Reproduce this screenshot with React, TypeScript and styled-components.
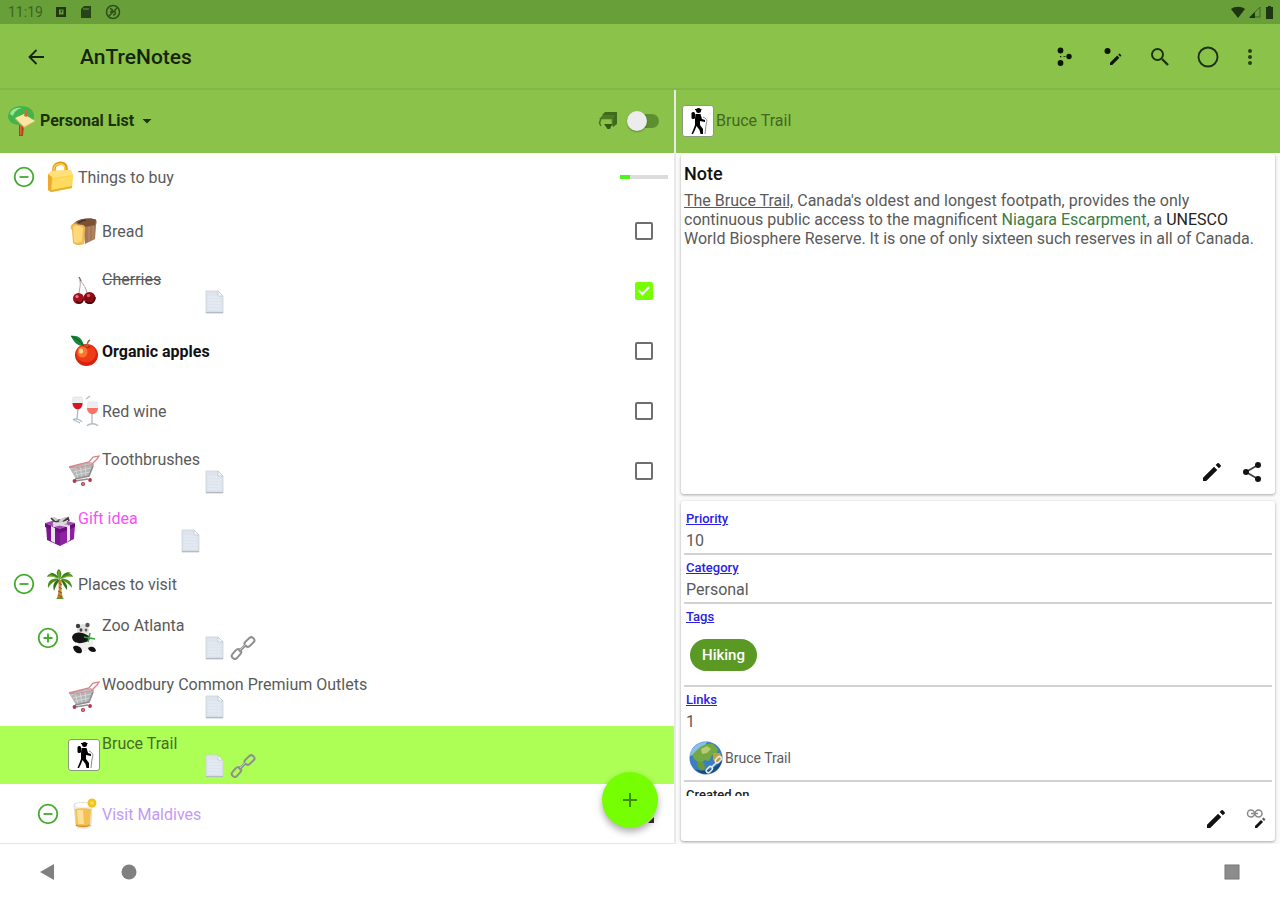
import React from 'react';
import styled, { createGlobalStyle } from 'styled-components';

const GlobalStyle = createGlobalStyle`
  *, *::before, *::after { box-sizing: border-box; }
  body { margin: 0; background: #fff; font-family: Roboto, "Liberation Sans", sans-serif; }
  button { font: inherit; border: 0; padding: 0; background: none; cursor: pointer; }
  svg { display: block; }
`;

const Screen = styled.div`
  height: 100vh;
  display: flex;
  flex-direction: column;
  color: #5a5a5a;
`;

const StatusBar = styled.div`
  flex: none;
  height: 24px;
  padding: 0 6px 0 8px;
  display: flex;
  align-items: center;
  justify-content: space-between;
  background: #689f38;
  color: #3d6420;
  font-size: 14px;
`;

const StatusGroup = styled.div<{ $gap: number }>`
  display: flex;
  align-items: center;
  gap: ${(p) => p.$gap}px;
`;

const AppBar = styled.header`
  flex: none;
  height: 66px;
  padding: 2px 20px 0 24px;
  display: flex;
  align-items: center;
  background: #8bc34a;
  border-bottom: 2px solid #82b84a;
`;

const AppTitle = styled.h1`
  flex: 1;
  margin: 0 0 0 32px;
  font-size: 21px;
  font-weight: 500;
  line-height: 24px;
  color: #15240a;
`;

const IconButton = styled.button`
  width: 24px;
  height: 24px;
  display: flex;
  align-items: center;
  justify-content: center;
`;

const Actions = styled.div`
  display: flex;
  gap: 24px;
  & > :last-child { margin-left: -6px; margin-right: -2px; }
`;

const Panes = styled.main`
  flex: 1;
  min-height: 0;
  display: grid;
  grid-template-columns: 676fr 604fr;
`;

const Pane = styled.section<{ $divided?: boolean }>`
  position: relative;
  min-width: 0;
  min-height: 0;
  display: flex;
  flex-direction: column;
  overflow: hidden;
  background: ${(p) => (p.$divided ? '#fff' : '#fafafa')};
  border-right: ${(p) => (p.$divided ? '2px solid rgba(226, 226, 226, 0.75)' : '0')};
`;

const PaneHeader = styled.div`
  flex: none;
  height: 63px;
  padding: 0 14px 2px 6px;
  display: flex;
  align-items: center;
  background: #8bc34a;
`;

const ListPicker = styled.label`
  display: flex;
  align-items: center;
  gap: 2px;
  margin-right: auto;
`;

const ListSelect = styled.select`
  appearance: none;
  border: 0;
  padding: 0;
  background: none;
  font: 700 16px/24px Roboto, "Liberation Sans", sans-serif;
  color: #1c3009;
`;

const Switch = styled.input`
  appearance: none;
  position: relative;
  width: 32px;
  height: 20px;
  margin: 0 1px 0 9px;
  &::before {
    content: '';
    position: absolute;
    inset: 3px 0 3px 4px;
    border-radius: 7px;
    background: #5d8f30;
  }
  &::after {
    content: '';
    position: absolute;
    left: 0;
    top: 0;
    width: 20px;
    height: 20px;
    border-radius: 50%;
    background: #ececec;
    box-shadow: 0 1px 2px rgba(0, 0, 0, 0.3);
  }
`;

const Tree = styled.ul`
  flex: 1;
  min-height: 0;
  margin: 0;
  padding: 0;
  list-style: none;
  overflow: hidden;
  border-bottom: 1px solid #e6e6e6;
`;

const TreeRow = styled.li<{ $height: number; $depth: number; $selected?: boolean }>`
  height: ${(p) => p.$height}px;
  padding: 0 6px 0 ${(p) => 12 + p.$depth * 24}px;
  display: flex;
  align-items: center;
  background: ${(p) => (p.$selected ? '#adff55' : 'transparent')};
`;

const Expander = styled.button`
  flex: none;
  width: 24px;
  height: 24px;
  margin-right: 8px;
  display: flex;
  align-items: center;
  justify-content: center;
`;

const RowBody = styled.div`
  flex: 1;
  align-self: stretch;
  display: flex;
  flex-direction: column;
  justify-content: center;
  padding: 1px 0 0 2px;
`;

const RowTitle = styled.span<{ $color?: string; $bold?: boolean; $done?: boolean }>`
  font-size: 16px;
  line-height: 20px;
  font-weight: ${(p) => (p.$bold ? 700 : 400)};
  color: ${(p) => p.$color || '#5a5a5a'};
  text-decoration: ${(p) => (p.$done ? 'line-through' : 'none')};
`;

const Badges = styled.span`
  display: flex;
  gap: 3px;
  height: 24px;
  margin-left: 101px;
`;

const CheckBox = styled.input`
  appearance: none;
  position: relative;
  width: 18px;
  height: 18px;
  margin: 0 15px 0 0;
  border: 2px solid #6e6e6e;
  border-radius: 2px;
  background: #fff;
  &:checked { border-color: #76ff03; background: #76ff03; }
  &:checked::after {
    content: '';
    position: absolute;
    left: 4px;
    top: 0;
    width: 6px;
    height: 11px;
    border: solid #fff;
    border-width: 0 2px 2px 0;
    transform: rotate(45deg);
  }
`;

const Progress = styled.progress`
  appearance: none;
  width: 48px;
  height: 4px;
  border: 0;
  &::-webkit-progress-bar { background: #dcdcdc; }
  &::-webkit-progress-value { background: #4cf516; }
`;

const RowMenu = styled.button`
  width: 18px;
  height: 18px;
  margin-right: 14px;
  display: flex;
  align-items: flex-end;
  justify-content: flex-end;
`;

const AddButton = styled.button`
  position: absolute;
  right: 16px;
  bottom: 16px;
  width: 56px;
  height: 56px;
  display: flex;
  align-items: center;
  justify-content: center;
  border-radius: 50%;
  background: #76ff03;
  box-shadow: 0 4px 7px rgba(0, 0, 0, 0.32);
`;

const HeaderTitle = styled.span`
  margin-left: 2px;
  font-size: 16px;
  line-height: 20px;
  color: #446622;
`;

const Cards = styled.div`
  flex: 1;
  min-height: 0;
  padding: 1px 5px 3px;
  display: flex;
  flex-direction: column;
  gap: 7px;
`;

const Card = styled.article`
  flex: 1 1 0;
  min-height: 0;
  display: flex;
  flex-direction: column;
  border-radius: 3px;
  background: #fff;
  box-shadow: 0 1px 3px rgba(0, 0, 0, 0.35);
`;

const CardBody = styled.div`
  flex: 1;
  min-height: 0;
  overflow: hidden;
  padding: 5px 3px 0;
`;

const NoteTitle = styled.h2`
  margin: 3px 0 5px;
  font-size: 18px;
  line-height: 24px;
  font-weight: 500;
  color: #111;
`;

const NoteText = styled.p`
  margin: 0;
  padding-right: 8px;
  font-size: 16px;
  line-height: 19px;
  color: #5a5a5a;
`;

const Underlined = styled.span`
  text-decoration: underline;
`;

const Strong = styled.span`
  color: #222;
`;

const NoteLink = styled.a`
  color: #3a7d44;
  text-decoration: none;
`;

const CardActions = styled.div<{ $inset: number }>`
  flex: none;
  height: 45px;
  padding: 0 ${(p) => p.$inset}px 0 0;
  display: flex;
  align-items: center;
  justify-content: flex-end;
  gap: 16px;
`;

const Field = styled.div`
  padding: 3px 2px 0;
  border-bottom: 2px solid #d2d2d2;
`;

const FieldLabel = styled.a`
  display: block;
  font-size: 13px;
  line-height: 20px;
  font-weight: 500;
  color: #2b20e8;
  text-decoration: underline;
`;

const FieldCaption = styled.div`
  font-size: 13px;
  line-height: 20px;
  font-weight: 500;
  color: #222;
`;

const FieldValue = styled.div`
  font-size: 16px;
  line-height: 24px;
`;

const Chip = styled.button`
  display: block;
  height: 32px;
  margin: 12px 4px 14px;
  padding: 0 12px;
  border-radius: 16px;
  background: #5a9a24;
  color: #fff;
  font-size: 15px;
  font-weight: 500;
`;

const LinkItem = styled.a`
  display: flex;
  align-items: center;
  gap: 1px;
  height: 46px;
  padding: 2px 0 0 2px;
  font-size: 14px;
  color: #5a5a5a;
  text-decoration: none;
`;

const NavBar = styled.nav`
  flex: none;
  height: 56px;
  padding: 0 36px;
  display: flex;
  align-items: center;
  gap: 57px;
  background: #fff;
  & > :last-child { margin-left: auto; }
`;

const ArtSvg = styled.svg`
  flex: none;
`;

const Art = ({ children }: { children: React.ReactNode }) => (
  <ArtSvg width="32" height="32" viewBox="0 0 32 32" aria-hidden="true">
    {children}
  </ArtSvg>
);

const BagIcon = () => (
  <Art>
    <path d="M10 13V8c0-7 12-8 12-1v5" fill="none" stroke="#e09c18" strokeWidth="3.5" />
    <path d="M10 12V8c0-6 11-7 11-1v4" fill="none" stroke="#ffd75a" strokeWidth="1.200" />
    <path d="M4 13l4-3 19-1 2 6-1 12-21 4-3-2z" fill="#ffd246" />
    <path d="M4 13l4-3 19-1 2 5-20 3z" fill="#ffe07a" />
    <path d="M4 13l4 3-1 15-3-2z" fill="#eda92c" />
    <path d="M9 18l19-3-1 11-19 3z" fill="#ffdc60" />
    <path d="M7 31l21-4v-2L7 29z" fill="#eaae2c" />
  </Art>
);

const BreadIcon = () => (
  <Art>
    <path d="M5 9c4-4 8-5 11-5l11 0c2 1 2 3 1 6l-1 14-10 5-2-18z" fill="#a4765a" />
    <path d="M8 7c5-4 16-5 20-2l-1 5-11 2z" fill="#7a5036" />
    <path d="M10 8c3-2 5-3 8-3" stroke="#4a3222" strokeWidth="1.500" fill="none" />
    <path d="M21 12v14M25 11v13" stroke="#bb8f6e" strokeWidth="1" />
    <path d="M3 11c1-3 5-3 7-1 4-1 8 0 7 4l-1 15c-4 2-9 1-11-1L4 15c-1-1-2-2-1-4z" fill="#efb94e" />
    <path d="M5 12c3-3 9-1 10 2l-1 13c-3 1-6 1-8 0z" fill="#ffd879" />
  </Art>
);

const CherriesIcon = () => (
  <Art>
    <path d="M12 5c1 6-1 10-1 14M12 5c4 5 6 8 7 13" fill="none" stroke="#b3a3a3" strokeWidth="1" />
    <path d="M11 2l2 4" stroke="#777" strokeWidth="1.500" />
    <circle cx="10.500" cy="23.500" r="5.500" fill="#a5101c" />
    <circle cx="21.500" cy="23" r="6" fill="#8d0914" />
    <path d="M8 26c4 4 7 1 7-2M18 27c5 3 9 0 9-5" fill="none" stroke="#470309" strokeWidth="1.500" />
    <circle cx="9" cy="21.500" r="1.600" fill="#ee7b82" />
    <circle cx="20.500" cy="20.500" r="1.700" fill="#d95c64" />
  </Art>
);

const AppleIcon = () => (
  <Art>
    <ellipse cx="18.500" cy="20" rx="11.500" ry="11" fill="#d5230d" />
    <ellipse cx="18" cy="18.500" rx="10" ry="9" fill="#ef3c16" />
    <ellipse cx="14.500" cy="17" rx="5" ry="5.500" fill="#fd7430" />
    <ellipse cx="13" cy="16" rx="2.200" ry="2.600" fill="#ffd890" />
    <path d="M17 12c2 1 4 1 6 0-2-1-4-1-6 0z" fill="#a91806" />
    <path d="M19 12c0-4 1-6 3-7" fill="none" stroke="#8a7a4a" strokeWidth="1.500" />
    <path d="M3 1c6-1 11 1 13 10C10 11 6 8 3 1z" fill="#16873a" />
    <path d="M3 1c5 2 9 5 13 10" fill="none" stroke="#0b5a22" strokeWidth="1" />
  </Art>
);

const WineIcon = () => (
  <Art>
    <path d="M5 2h9l1 8c-1 5-10 5-11 0z" fill="#eceff2" stroke="#dde1e5" strokeWidth=".7" />
    <path d="M4.500 8h10c0 8-9 9-10 0z" fill="#d9151f" />
    <path d="M10 14l-1 10M5 25c2-2 7-1 9 2M6 25l6 3" fill="none" stroke="#a8b8cc" strokeWidth="1.300" />
    <path d="M20 7h9l1 8c-1 5-10 5-11 0z" fill="#eceff2" stroke="#dde1e5" strokeWidth=".7" />
    <path d="M19 13h11c-1 8-10 8-11 0z" fill="#fa7063" />
    <path d="M24 19v9M19 31c2-3 9-3 11 0M18 4l4-3" fill="none" stroke="#b4bac2" strokeWidth="1.300" />
  </Art>
);

const CartIcon = () => (
  <Art>
    <path d="M1 12l22-5 3 3-5 11-13 3z" fill="#b4b4b4" />
    <path d="M3 14l20-5M5 17l18-4M7 20l15-3M7 12l3 11M12 11l2 11M17 9l1 12" stroke="#d8d8d8" strokeWidth=".9" />
    <path d="M1 12l20-5 4-5 6-1-2 3-5 5" fill="none" stroke="#d8848c" strokeWidth="1.300" />
    <path d="M1 12l6 1 19-4" fill="none" stroke="#c9929a" strokeWidth="1" />
    <path d="M7 24l14-3 4-10M7 26l13-2" fill="none" stroke="#8e8e8e" strokeWidth="1.600" />
    <circle cx="6.500" cy="26" r="1.900" fill="#b5344e" />
    <circle cx="15" cy="29" r="2.100" fill="#b5344e" />
    <circle cx="22" cy="25" r="1.900" fill="#b5344e" />
    <circle cx="15" cy="29" r=".7" fill="#eee" />
  </Art>
);

const GiftIcon = () => (
  <Art>
    <path d="M2 10l14 4v17L3 25z" fill="#7d1492" />
    <path d="M16 14l15-5-1 15-14 7z" fill="#8c22a0" />
    <path d="M1 8l14-4 16 4-15 6z" fill="#a648b6" />
    <path d="M1 8l15 6v4L1 12zM16 14l15-6v4l-15 6z" fill="#6b0e7e" />
    <path d="M7 11l4 2v15l-4-2zM23 11l3-1v15l-3 2z" fill="#e8e6ea" />
    <path d="M8 5c-1-4 4-4 7 1 4-5 10-5 9-1l-7 5z" fill="#c9cbc9" />
    <path d="M7 3l4 4 4-1M19 7l5-4 1 3" fill="none" stroke="#3c3c3c" strokeWidth="1.700" />
    <path d="M9 8l15 3M23 7l-14 4" stroke="#dcdade" strokeWidth="2.400" />
  </Art>
);

const PalmIcon = () => (
  <Art>
    <path d="M14 12h4c-1 6-1 12 1 18h-6c2-6 2-12 1-18z" fill="#c98a35" />
    <path d="M15 15l3 2M15 19l3 2M14 23l4 2M14 27l4 2" stroke="#8c5518" strokeWidth="1" />
    <path d="M16 11C10 3 4 5 3 9c5-1 8 0 13 2zM16 11c6-7 12-6 13-2-5-1-8 0-13 2zM16 11C8 9 3 13 4 20c4-6 7-7 12-9zM16 11c8-1 12 3 12 9-4-5-7-7-12-9zM15 11C12 6 12 3 15 1c3 3 3 6 1 10z" fill="#4a8f1c" />
    <path d="M16 11c-5 1-8 5-6 12 2-6 4-8 6-12zM17 11c4 2 7 6 6 11-3-4-5-7-6-11z" fill="#2d7312" />
    <path d="M16 11C13 7 9 4 6 5c3 2 6 3 10 6zM16 11c3-5 7-8 11-6-4 1-8 3-11 6z" fill="#357c14" />
    <path d="M5 8c5 0 7 1 10 4M27 8c-5 0-8 2-10 4M15 3v7" fill="none" stroke="#89bf42" strokeWidth="1" />
    <path d="M12 31h8l-2-2h-4z" fill="#5b9a2a" />
  </Art>
);

const PandaIcon = () => (
  <Art>
    <ellipse cx="17" cy="19" rx="8" ry="10" fill="#efefed" />
    <circle cx="15" cy="8" r="6" fill="#e2e2e0" />
    <circle cx="10" cy="4" r="2.200" fill="#3d3d3d" />
    <circle cx="19.500" cy="3" r="2.200" fill="#555" />
    <ellipse cx="13" cy="8" rx="1.500" ry="1.800" fill="#444" />
    <ellipse cx="18" cy="8" rx="1.400" ry="1.600" fill="#666" />
    <path d="M4 15c2-6 10-5 15-2 3 1 4 4 1 6-6 3-15 4-16-4z" fill="#151515" />
    <path d="M5 25c3-3 9 0 9 4 0 4-8 3-9-4zM20 26c4-3 8 0 8 3-2 2-7 1-8-3z" fill="#111" />
    <path d="M16 15l11 2M22 11l-2 9" stroke="#39a03f" strokeWidth="1.500" />
  </Art>
);

const HikerIcon = () => (
  <Art>
    <rect x=".5" y=".5" width="31" height="31" rx="2.500" fill="#fff" stroke="#8a9a80" />
    <circle cx="16.500" cy="5.500" r="2.500" fill="#000" />
    <path d="M13 4h6.500v1.200H13z" fill="#000" />
    <path d="M13.500 9h5l1.500 5 3 1v2l-5-1v4l3 4 0 5h-2.500l-1-4-3-4-1.500 4-2 4H9.500l2-5 1.500-4v-6z" fill="#000" />
    <rect x="9.500" y="7" width="3.500" height="7" rx="1.500" fill="#000" />
    <path d="M21 12c5 2 4 5 3 8l-1 9" fill="none" stroke="#8a8a8a" strokeWidth="1" />
  </Art>
);

const DrinkIcon = () => (
  <Art>
    <path d="M6 6c4-2 14-2 18 0l-1 22c-2 3-13 3-15 0z" fill="#f2efe6" stroke="#d8d3c6" strokeWidth=".7" />
    <path d="M7 11c4-1 12-1 16 0l-1 16c-2 2-12 2-14 0z" fill="#f5c052" />
    <path d="M9 12h6l1 14h-6z" fill="#fce09a" />
    <path d="M8 27c3 2 11 2 14 0" fill="none" stroke="#d98f28" strokeWidth="1.500" />
    <ellipse cx="15" cy="7" rx="8" ry="2" fill="#fff" />
    <circle cx="24" cy="5" r="4.500" fill="#f0c61c" />
    <path d="M24 3v4M22 5h4" stroke="#fae77a" strokeWidth="1" />
  </Art>
);

const TreeIcon = () => (
  <Art>
    <path d="M13 19h5l-1 12h-4z" fill="#b3401c" />
    <path d="M14 19h1.500v11H14z" fill="#d9693b" />
    <path d="M2 12c0-6 5-11 13-11s13 4 13 10-6 9-13 9S3 18 2 12z" fill="#43b44a" />
    <path d="M4 9c1-5 7-7 12-6-5 1-8 4-9 8z" fill="#9be39a" />
    <path d="M9 13l9-4 11 7-11 6z" fill="#f8e6a2" />
    <path d="M9 13l9 9v1l-9-9zM18 22l11-6v1l-11 6z" fill="#d4b560" />
    <path d="M20 4l2 1-1 7-3-1z" fill="#d56a35" />
  </Art>
);

const GlobeIcon = () => (
  <svg width="36" height="36" viewBox="0 0 36 36" aria-hidden="true">
    <circle cx="18" cy="18" r="16.500" fill="#3c7fc0" />
    <path d="M5 8C9 3 14 2 19 2l-3 5-7 4-4 4-3 1c0-3 1-6 3-8z" fill="#86bfe8" />
    <path d="M10 9c4-4 9-6 15-5l5 5-1 5-5 1-3 6-4-1-4 3-6-3-3-5z" fill="#74a843" />
    <path d="M13 9l6-3 4 3-4 4-5 1z" fill="#b6cc72" />
    <path d="M25 13l7 0 2 5-4 4-5-2z" fill="#b9a33c" />
    <path d="M9 21l7 2 1 5-3 4-4-5z" fill="#6a9a38" />
    <path d="M34 20c-1 7-7 14-16 14-4 0-8-2-11-5 11 4 20 0 27-9z" fill="#1c4a85" />
    <g fill="none" stroke="#e3e8ec" strokeWidth="1.600">
      <rect x="18" y="28" width="7" height="4" rx="2" transform="rotate(-45 21 30)" />
      <rect x="27" y="18" width="7" height="4" rx="2" transform="rotate(-45 30 20)" />
      <path d="M23.500 27.500l5-5" />
    </g>
  </svg>
);

const PageBadge = () => (
  <svg width="24" height="24" viewBox="0 0 24 24" role="img" aria-label="Has note">
    <path d="M3 1h12l5 5v17H3z" fill="#dde4ed" stroke="#cdd2da" strokeWidth=".8" />
    <path d="M5 7h12M5 10h13M5 13h13M5 16h13M5 19h13" stroke="#e8edf3" strokeWidth="1" />
    <path d="M15 1l5 5h-5z" fill="#f4f6f9" stroke="#b9bfc8" strokeWidth=".6" />
    <path d="M3 22.500h17" stroke="#b4bac4" strokeWidth="1.200" />
  </svg>
);

const ChainBadge = () => (
  <svg width="26" height="24" viewBox="0 0 26 24" role="img" aria-label="Has link">
    <g fill="none" stroke="#8f8f8f" strokeWidth="2">
      <rect x="1" y="15" width="11" height="6" rx="3" transform="rotate(-48 6.500 18)" />
      <rect x="14" y="3" width="11" height="6" rx="3" transform="rotate(-42 19.500 6)" />
      <path d="M9 15.500l7-7" strokeWidth="2.600" />
    </g>
    <path d="M10 14l6-6" stroke="#d5d5d5" strokeWidth=".8" />
  </svg>
);

const ExpandGlyph = ({ open }: { open: boolean }) => (
  <svg width="22" height="22" viewBox="0 0 22 22" fill="none" stroke="#43ab2c" strokeWidth="1.800">
    <circle cx="11" cy="11" r="9.300" />
    <path d={open ? 'M6.500 11h9' : 'M6.500 11h9M11 6.500v9'} />
  </svg>
);

const PencilIcon = () => (
  <svg width="24" height="24" viewBox="0 0 24 24" fill="#111">
    <path d="M3 17.800V21h3.200L17.310 9.940l-3.250-3.250zM20.710 6.540a1 1 0 0 0 0-1.410l-1.840-1.840a1 1 0 0 0-1.410 0l-1.830 1.830 3.250 3.250z" />
  </svg>
);

type Item = {
  title: string;
  icon: React.ReactNode;
  depth: number;
  height: number;
  open?: boolean;
  color?: string;
  bold?: boolean;
  done?: boolean;
  selected?: boolean;
  note?: boolean;
  link?: boolean;
  check?: boolean;
  progress?: number;
  menu?: boolean;
};

const items: Item[] = [
  { title: 'Things to buy', icon: <BagIcon />, depth: 0, height: 48, open: true, progress: 0.2 },
  { title: 'Bread', icon: <BreadIcon />, depth: 1, height: 60, check: false },
  { title: 'Cherries', icon: <CherriesIcon />, depth: 1, height: 60, check: true, done: true, note: true },
  { title: 'Organic apples', icon: <AppleIcon />, depth: 1, height: 60, check: false, bold: true, color: '#111' },
  { title: 'Red wine', icon: <WineIcon />, depth: 1, height: 60, check: false },
  { title: 'Toothbrushes', icon: <CartIcon />, depth: 1, height: 60, check: false, note: true },
  { title: 'Gift idea', icon: <GiftIcon />, depth: 0, height: 59, color: '#f552f5', note: true },
  { title: 'Places to visit', icon: <PalmIcon />, depth: 0, height: 48, open: true },
  { title: 'Zoo Atlanta', icon: <PandaIcon />, depth: 1, height: 59, open: false, note: true, link: true },
  { title: 'Woodbury Common Premium Outlets', icon: <CartIcon />, depth: 1, height: 59, note: true },
  { title: 'Bruce Trail', icon: <HikerIcon />, depth: 1, height: 58, selected: true, color: '#456b25', note: true, link: true },
  { title: 'Visit Maldives', icon: <DrinkIcon />, depth: 1, height: 60, open: true, color: '#c39af5', menu: true },
];

const TreeItem = ({ item }: { item: Item }) => (
  <TreeRow $height={item.height} $depth={item.depth} $selected={item.selected}>
    {item.open === undefined ? (
      <Expander as="span" />
    ) : (
      <Expander aria-label={item.open ? 'Collapse' : 'Expand'}>
        <ExpandGlyph open={item.open} />
      </Expander>
    )}
    {item.icon}
    <RowBody>
      <RowTitle $color={item.color} $bold={item.bold} $done={item.done}>{item.title}</RowTitle>
      {item.note && (
        <Badges>
          <PageBadge />
          {item.link && <ChainBadge />}
        </Badges>
      )}
    </RowBody>
    {item.check !== undefined && <CheckBox type="checkbox" defaultChecked={item.check} aria-label={item.title} />}
    {item.progress !== undefined && <Progress value={item.progress} aria-label={item.title} />}
    {item.menu && (
      <RowMenu aria-label="More">
        <svg width="6" height="6" viewBox="0 0 6 6"><path d="M6 0v6H0z" fill="#333" /></svg>
      </RowMenu>
    )}
  </TreeRow>
);

export default function App() {
  return (
    <Screen>
      <GlobalStyle />
      <StatusBar>
        <StatusGroup $gap={12}>
          <span>11:19</span>
          <svg width="12" height="12" viewBox="0 0 12 12"><path fillRule="evenodd" d="M1 1h10v10H1zM4 3.500v5h4.500v-5zM5.500 4.500h2L6 7.500z" fill="#1f3810" /></svg>
          <svg width="14" height="14" viewBox="0 0 14 14"><path d="M5 1h7v12H2V4z" fill="#27431a" /><path d="M5 3v2M7 3v2M9 3v2" stroke="#689f38" /></svg>
          <svg width="16" height="16" viewBox="0 0 16 16" fill="none" stroke="#2f4f1c" strokeWidth="1.500"><circle cx="8" cy="8" r="6.500" /><path d="M4 12l8-8M5 5c3-1 3 3 0 3M8 11c3 0 3-3 1-4" /></svg>
        </StatusGroup>
        <StatusGroup $gap={4}>
          <svg width="14" height="12" viewBox="0 0 14 12"><path d="M0 3c4-3 10-3 14 0L7 12z" fill="#1d3510" /></svg>
          <svg width="12" height="12" viewBox="0 0 12 12"><path d="M11 1v10H1z" fill="none" stroke="#3f6425" /><path d="M6 6v6H0z" fill="#1d3510" /></svg>
          <svg width="9" height="13" viewBox="0 0 9 13"><path d="M3 0h3v1h2v12H1V1h2z" fill="#1d3510" /></svg>
        </StatusGroup>
      </StatusBar>
      <AppBar>
        <IconButton aria-label="Back">
          <svg width="24" height="24" viewBox="0 0 24 24" fill="none" stroke="#15240a" strokeWidth="1.800"><path d="M20 12H6M12.500 5L5.500 12l7 7" /></svg>
        </IconButton>
        <AppTitle>AnTreNotes</AppTitle>
        <Actions>
          <IconButton aria-label="Add child">
            <svg width="24" height="24" viewBox="0 0 24 24" fill="#0c1605"><circle cx="8.500" cy="5.500" r="2.900" /><circle cx="8.500" cy="18" r="2.900" /><circle cx="17" cy="11.500" r="2.700" /><path d="M8 11h1.300v1.300H8zM11.500 11.200h2v.9h-2z" /></svg>
          </IconButton>
          <IconButton aria-label="Edit item">
            <svg width="24" height="24" viewBox="0 0 24 24" fill="#0c1605"><circle cx="7.500" cy="6" r="3" /><path d="M10 20v-2.200l7.200-7.200 2.200 2.200-7.200 7.200zM18.200 9.600l1.300-1.200 2 2-1.300 1.400z" /></svg>
          </IconButton>
          <IconButton aria-label="Search">
            <svg width="24" height="24" viewBox="0 0 24 24" fill="none" stroke="#1d3210"><circle cx="9.500" cy="9.500" r="5.500" strokeWidth="2" /><path d="M14 14l6 6" strokeWidth="2.400" /></svg>
          </IconButton>
          <IconButton aria-label="Select">
            <svg width="24" height="24" viewBox="0 0 24 24" fill="none" stroke="#1d3210" strokeWidth="1.900"><circle cx="12" cy="12" r="9.500" /></svg>
          </IconButton>
          <IconButton aria-label="More options">
            <svg width="24" height="24" viewBox="0 0 24 24" fill="#27411a"><circle cx="12" cy="6" r="2" /><circle cx="12" cy="12" r="2" /><circle cx="12" cy="18" r="2" /></svg>
          </IconButton>
        </Actions>
      </AppBar>

      <Panes>
        <Pane $divided>
          <PaneHeader>
            <ListPicker>
              <TreeIcon />
              <ListSelect aria-label="List" defaultValue="personal">
                <option value="personal">Personal List</option>
              </ListSelect>
              <svg width="20" height="20" viewBox="0 0 20 20"><path d="M5.500 8h9L10 12.500z" fill="#1c3009" /></svg>
            </ListPicker>
            <svg width="20" height="20" viewBox="0 0 20 20" aria-hidden="true">
              <path d="M4 4l3-3h12v12l-4 3V6z" fill="#3f6a1c" />
              <path d="M1 8l4-4h12l-2 4z" fill="#4a7a22" />
              <path d="M3 15L1.500 12 3 7.500h11.500V14l-3 1" fill="none" stroke="#4a7a22" strokeWidth="1.600" />
              <path d="M6 13h8l-2 5H9.500z" fill="#345a14" />
            </svg>
            <Switch type="checkbox" role="switch" aria-label="Show details" />
          </PaneHeader>
          <Tree>
            {items.map((item) => <TreeItem key={item.title} item={item} />)}
          </Tree>
          <AddButton aria-label="Add">
            <svg width="14" height="14" viewBox="0 0 14 14"><path d="M7 0v14M0 7h14" stroke="#3f8a06" strokeWidth="2" /></svg>
          </AddButton>
        </Pane>

        <Pane>
          <PaneHeader>
            <HikerIcon />
            <HeaderTitle>Bruce Trail</HeaderTitle>
          </PaneHeader>
          <Cards>
            <Card>
              <CardBody>
                <NoteTitle>Note</NoteTitle>
                <NoteText>
                  <Underlined>The Bruce Trail,</Underlined> Canada's oldest and longest footpath, provides the only continuous
                  public access to the magnificent <NoteLink href="#escarpment">Niagara Escarpment</NoteLink>, a{' '}
                  <Strong>UNESCO</Strong> World Biosphere Reserve. It is one of only sixteen such reserves in all of Canada.
                </NoteText>
              </CardBody>
              <CardActions $inset={11}>
                <IconButton aria-label="Edit note"><PencilIcon /></IconButton>
                <IconButton aria-label="Share note">
                  <svg width="24" height="24" viewBox="0 0 24 24" fill="#111"><path d="M18 5L6 12l12 7" fill="none" stroke="#444" strokeWidth="1.800" /><circle cx="18" cy="5" r="3" /><circle cx="6" cy="12" r="3" /><circle cx="18" cy="19" r="3" /></svg>
                </IconButton>
              </CardActions>
            </Card>
            <Card>
              <CardBody>
                <Field>
                  <FieldLabel href="#priority">Priority</FieldLabel>
                  <FieldValue>10</FieldValue>
                </Field>
                <Field>
                  <FieldLabel href="#category">Category</FieldLabel>
                  <FieldValue>Personal</FieldValue>
                </Field>
                <Field>
                  <FieldLabel href="#tags">Tags</FieldLabel>
                  <Chip>Hiking</Chip>
                </Field>
                <Field>
                  <FieldLabel href="#links">Links</FieldLabel>
                  <FieldValue>1</FieldValue>
                  <LinkItem href="#bruce-trail"><GlobeIcon />Bruce Trail</LinkItem>
                </Field>
                <Field>
                  <FieldCaption>Created on</FieldCaption>
                </Field>
              </CardBody>
              <CardActions $inset={7}>
                <IconButton aria-label="Edit properties"><PencilIcon /></IconButton>
                <IconButton aria-label="Edit links">
                  <svg width="24" height="24" viewBox="0 0 24 24" fill="none"><g stroke="#8a8a8a" strokeWidth="1.500"><rect x="3.500" y="3" width="7" height="7" rx="3.500" /><rect x="11" y="3" width="7" height="7" rx="3.500" /><path d="M7 6.500h7" /></g><path d="M11 19l6-6 2 2-6 6h-2z" fill="#111" /><path d="M18 12l1.500-1.500 2 2L20 14z" fill="#555" /></svg>
                </IconButton>
              </CardActions>
            </Card>
          </Cards>
        </Pane>
      </Panes>

      <NavBar>
        <IconButton aria-label="Back"><svg width="16" height="16" viewBox="0 0 16 16"><path d="M14 0v16L0 8z" fill="#808080" /></svg></IconButton>
        <IconButton aria-label="Home"><svg width="16" height="16" viewBox="0 0 16 16"><circle cx="8" cy="8" r="7.500" fill="#808080" /></svg></IconButton>
        <IconButton aria-label="Recent apps"><svg width="16" height="16" viewBox="0 0 16 16"><rect x="1" y="1" width="14" height="14" fill="#8c8c8c" stroke="#777" /></svg></IconButton>
      </NavBar>
    </Screen>
  );
}
